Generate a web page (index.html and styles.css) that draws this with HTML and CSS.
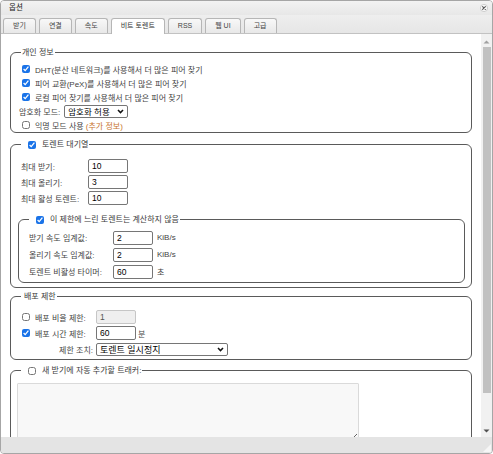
FILE: index.html
```html
<!DOCTYPE html>
<html lang="ko">
<head>
<meta charset="utf-8">
<title>옵션</title>
<link rel="stylesheet" href="styles.css">
</head>
<body>
<div class="window">
  <div class="titlebar">
    <span class="title">옵션</span>
    <svg class="close" width="8" height="8" viewBox="0 0 8 8"><circle cx="4" cy="4" r="3.6" fill="#fafafa" stroke="#c4c4c4" stroke-width="0.8"/><path d="M2.6 2.6 L5.4 5.4 M5.4 2.6 L2.6 5.4" stroke="#555" stroke-width="1.1" stroke-linecap="round"/></svg>
  </div>
  <div class="tabbar">
    <div class="tab">받기</div>
    <div class="tab">연결</div>
    <div class="tab">속도</div>
    <div class="tab active">비트 토렌트</div>
    <div class="tab">RSS</div>
    <div class="tab">웹 UI</div>
    <div class="tab">고급</div>
  </div>
  <div class="main">
    <div class="content">
      <fieldset class="fs fs1">
        <legend class="lg">개인 정보</legend>
        <div class="row"><input class="cb" type="checkbox" checked><span>DHT(분산 네트워크)를 사용해서 더 많은 피어 찾기</span></div>
        <div class="row"><input class="cb" type="checkbox" checked><span>피어 교환(PeX)를 사용해서 더 많은 피어 찾기</span></div>
        <div class="row"><input class="cb" type="checkbox" checked><span>로컬 피어 찾기를 사용해서 더 많은 피어 찾기</span></div>
        <div class="row"><span class="lbl-enc">암호화 모드:</span><span class="select sel1"><span class="sel-text">암호화 허용</span><svg class="chev" width="7" height="5" viewBox="0 0 7 5"><path d="M1 1 L3.5 3.6 L6 1" fill="none" stroke="#111" stroke-width="1.5"/></svg></span></div>
        <div class="row"><input class="cb" type="checkbox"><span>익명 모드 사용 <span class="link">(추가 정보)</span></span></div>
      </fieldset>

      <fieldset class="fs fs2">
        <legend class="lg lg-cb"><input class="cb" type="checkbox" checked><span>토렌트 대기열</span></legend>
        <div class="grid g2">
          <span>최대 받기:</span><input class="num" type="text" value="10">
          <span>최대 올리기:</span><input class="num" type="text" value="3">
          <span>최대 활성 토렌트:</span><input class="num" type="text" value="10">
        </div>
        <fieldset class="fs nested">
          <legend class="lg lg-cb"><input class="cb" type="checkbox" checked><span>이 제한에 느린 토렌트는 계산하지 않음</span></legend>
          <div class="grid g3">
            <span>받기 속도 임계값:</span><input class="num" type="text" value="2"><span class="unit">KiB/s</span>
            <span>올리기 속도 임계값:</span><input class="num" type="text" value="2"><span class="unit">KiB/s</span>
            <span>토렌트 비활성 타이머:</span><input class="num" type="text" value="60"><span class="unit">초</span>
          </div>
        </fieldset>
      </fieldset>

      <fieldset class="fs fs3">
        <legend class="lg">배포 제한</legend>
        <div class="grid g4">
          <span class="c1"><input class="cb" type="checkbox"><span>배포 비율 제한:</span></span><span class="c2"><input class="num dis" type="text" value="1" disabled></span>
          <span class="c1"><input class="cb" type="checkbox" checked><span>배포 시간 제한:</span></span><span class="c2"><input class="num" type="text" value="60"><span class="unit2">분</span></span>
          <span class="c1 right">제한 조치:</span><span class="c2"><span class="select sel2"><span class="sel-text">토렌트 일시정지</span><svg class="chev" width="7" height="5" viewBox="0 0 7 5"><path d="M1 1 L3.5 3.6 L6 1" fill="none" stroke="#111" stroke-width="1.5"/></svg></span></span>
        </div>
      </fieldset>

      <fieldset class="fs fs4">
        <legend class="lg lg-cb"><input class="cb" type="checkbox"><span>새 받기에 자동 추가할 트래커:</span></legend>
        <textarea class="trackers"></textarea>
      </fieldset>
    </div>
    <div class="scrollbar">
      <svg class="arrow" width="7" height="4" viewBox="0 0 7 4"><path d="M0.5 3.5 L3.5 0.5 L6.5 3.5 Z" fill="#a0a0a0"/></svg>
      <div class="thumb"></div>
      <div class="spacer"></div>
      <svg class="arrow down" width="7" height="4" viewBox="0 0 7 4"><path d="M0.5 0.5 L3.5 3.5 L6.5 0.5 Z" fill="#505050"/></svg>
    </div>
  </div>
  <div class="statusbar">
    <svg class="grip" width="8" height="8" viewBox="0 0 8 8"><path d="M8 0 L8 8 L0 8 Z" fill="#f6f6f6"/></svg>
  </div>
</div>
</body>
</html>
```

FILE: styles.css
```css
* { box-sizing: border-box; }
html, body { margin: 0; padding: 0; background: #ffffff; }
body {
  font-family: "Liberation Sans", "Noto Sans CJK KR", sans-serif;
  font-size: 8px;
  color: #444;
}
.window {
  width: 493px;
  height: 454px;
  border: 1px solid #a6a6a6;
  border-radius: 4px;
  overflow: hidden;
  display: flex;
  flex-direction: column;
  background: #fff;
}
.titlebar {
  flex: none;
  height: 14px;
  display: flex;
  align-items: center;
  justify-content: space-between;
  padding: 0 4px 0 8px;
  background: linear-gradient(#f3f3f3, #e7e7e7);
}
.title { font-size: 7.5px; color: #222; line-height: 14px; }
.close { display: block; }
.tabbar {
  flex: none;
  height: 19px;
  display: flex;
  align-items: flex-end;
  padding-left: 2px;
  background: linear-gradient(#eeeeee, #e6e6e6);
  border-bottom: 1px solid #c2c2c2;
}
.tab {
  height: 15px;
  line-height: 14px;
  padding: 0 9px;
  margin-right: 3px;
  font-size: 7px;
  color: #444;
  border: 1px solid #b6b6b6;
  border-bottom: 0;
  border-radius: 3px 3px 0 0;
  background: linear-gradient(#f8f8f8, #e8e8e8);
  white-space: nowrap;
}
.tab.active {
  background: #ffffff;
  height: 16px;
  margin-bottom: -1px;
  color: #333;
}
.main {
  flex: 1;
  display: flex;
  min-height: 0;
}
.content {
  flex: 1;
  overflow: hidden;
  padding: 13px 9px 0 9px;
}
.fs {
  margin: 0;
  border: 1px solid #5a5a5a;
  border-radius: 6px;
  padding: 0 6px 0 10px;
  min-width: 0;
}
.lg {
  padding: 0 1px;
  line-height: 11px;
  height: 11px;
  color: #3a3a3a;
}
.lg-cb {
  display: flex;
  align-items: center;
}
.lg-cb .cb { margin: 0 6px 0 6px; }
.cb {
  width: 8px;
  height: 8px;
  margin: 0 5px 0 1px;
  flex: none;
  accent-color: #1a73e8;
}
.row {
  display: flex;
  align-items: center;
  height: 14px;
  white-space: nowrap;
}
.fs1 { padding-top: 4px; margin-bottom: 6px; }
.link { color: #c8742e; }
.lbl-enc { margin-left: -2px; margin-right: 4px; }
.select {
  display: inline-flex;
  align-items: center;
  justify-content: space-between;
  height: 13px;
  border: 1px solid #767676;
  border-radius: 2px;
  padding: 0 3px 0 3px;
  color: #000;
  background: #fff;
}
.sel1 { width: 64px; font-size: 8.5px; }
.sel2 { width: 132px; font-size: 9px; }
.chev { display: block; flex: none; }
.sel-text { white-space: nowrap; }

.grid { display: grid; align-items: center; white-space: nowrap; }
.g2 { grid-template-columns: 67px 40px; grid-auto-rows: 16px; }
.num {
  width: 40px;
  height: 14px;
  border: 1px solid #767676;
  border-radius: 2px;
  padding: 0 3px;
  font-family: "Liberation Sans", sans-serif;
  font-size: 8.5px;
  color: #000;
  background: #fff;
  margin: 0;
}
.num.dis { background: #efefef; border-color: #c6c6c6; color: #555; }
.fs2 { padding-top: 8px; padding-bottom: 4px; margin-bottom: 3px; }
.nested {
  margin: 8px 0 0 -3px;
  padding-top: 4px;
  padding-bottom: 2px;
}
.g3 { grid-template-columns: 84px 40px auto; grid-auto-rows: 17px; }
.unit { margin-left: 4px; }
.fs3 { padding-top: 7px; padding-bottom: 2px; margin-bottom: 5px; }
.fs3 .lg { padding-left: 3px; }
.g4 { grid-template-columns: 75px auto; grid-auto-rows: 16px; }
.c1 { display: flex; align-items: center; }
.c1.right { justify-content: flex-end; padding-right: 3px; }
.c2 { display: flex; align-items: center; }
.unit2 { margin-left: 2px; }
.fs4 { padding-top: 7px; height: 120px; }
.trackers {
  display: block;
  width: 342px;
  height: 60px;
  margin-left: -4px;
  background: #f8f8f8;
  border: 1px solid #dadada;
  border-radius: 1px;
}

.scrollbar {
  flex: none;
  width: 11px;
  background: #f1f1f1;
  display: flex;
  flex-direction: column;
  align-items: center;
  padding-top: 6px;
}
.arrow { display: block; flex: none; }
.thumb {
  flex: none;
  width: 8px;
  height: 346px;
  margin-top: 3px;
  background: #c1c1c1;
}
.spacer { flex: 1; }
.arrow.down { margin-bottom: 4px; }
.statusbar {
  flex: none;
  height: 16px;
  background: #e4e4e4;
  display: flex;
  justify-content: flex-end;
  align-items: flex-end;
}
.grip { display: block; margin: 0 1px 1px 0; }
```
